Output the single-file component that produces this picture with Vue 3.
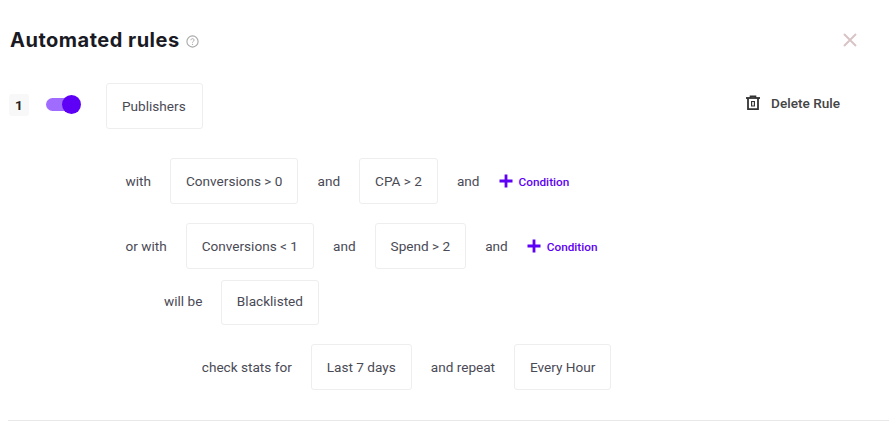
<script setup>
const rows = [
  { indent: 'r1', items: [['t','with'],['b','Conversions > 0'],['t','and'],['b','CPA > 2'],['t','and'],['c','Condition']] },
  { indent: 'r2', items: [['t','or with'],['b','Conversions < 1'],['t','and'],['b','Spend > 2'],['t','and'],['c','Condition']] },
  { indent: 'r3', items: [['t','will be'],['b','Blacklisted']] },
  { indent: 'r4', items: [['t','check stats for'],['b','Last 7 days'],['t','and repeat'],['b','Every Hour']] }
]
</script>

<template>
  <div class="page">
    <header class="head">
      <div class="title-wrap">
        <h1 class="title">Automated rules</h1>
        <svg class="help" width="13" height="13" viewBox="0 0 13 13" fill="none">
          <circle cx="6.5" cy="6.5" r="5.6" stroke="#a8a8a8" stroke-width="1.1" />
          <path d="M4.9 5.2c0-.9.7-1.5 1.6-1.5s1.6.6 1.6 1.4c0 1.2-1.6 1.2-1.6 2.5" stroke="#a8a8a8" stroke-width="1" />
          <circle cx="6.5" cy="9.3" r=".65" fill="#a8a8a8" />
        </svg>
      </div>
      <svg class="close" width="14" height="14" viewBox="0 0 14 14" fill="none">
        <path d="M1 1l12 12M13 1L1 13" stroke="#d8c4c6" stroke-width="2" />
      </svg>
    </header>

    <section class="rule-top">
      <span class="num">1</span>
      <span class="toggle"><span class="knob"></span></span>
      <span class="box">Publishers</span>
      <span class="delete">
        <svg width="16" height="16" viewBox="0 0 16 16" fill="none">
          <path d="M1 3h14" stroke="#333" stroke-width="1.8" />
          <path d="M5.5 3V1.2h5V3" stroke="#333" stroke-width="1.6" />
          <path d="M3 3v11.2h10V3" stroke="#333" stroke-width="1.8" />
          <path d="M6.6 6.5h2.8v4.5H6.6z" stroke="#333" stroke-width="1.2" />
        </svg>
        Delete Rule
      </span>
    </section>

    <section class="rows">
      <div v-for="(row, i) in rows" :key="i" class="row" :class="row.indent">
        <template v-for="(it, j) in row.items" :key="j">
          <span v-if="it[0] === 't'" class="txt">{{ it[1] }}</span>
          <span v-else-if="it[0] === 'b'" class="box">{{ it[1] }}</span>
          <span v-else class="cond">
            <svg width="14" height="14" viewBox="0 0 14 14"><path d="M7 0.5v13M0.5 7h13" stroke="#5e00f5" stroke-width="2.8" /></svg>
            <span class="cond-label">{{ it[1] }}</span>
          </span>
        </template>
      </div>
    </section>

    <hr class="rule-line" />
  </div>
</template>

<style>
html, body { margin: 0; background: #fff; }
</style>

<style scoped>
.page {
  width: 892px;
  height: 428px;
  box-sizing: border-box;
  overflow: hidden;
  padding: 0 3px 0 8px;
  font-family: Roboto, "Liberation Sans", sans-serif;
  font-size: 13.6px;
  color: #4a4a55;
}
.head {
  display: flex;
  justify-content: space-between;
  align-items: center;
  height: 33px;
  margin-top: 24px;
  padding: 0 32px 0 2px;
}
.title-wrap { display: flex; align-items: center; gap: 6px; }
.title {
  margin: 0;
  font-family: Inter, sans-serif;
  font-size: 20px;
  letter-spacing: 0.5px;
  font-weight: 700;
  color: #1a1a24;
  line-height: 33px;
}
.help { margin-top: 1px; }
.close { margin-top: -1px; }
.rule-top {
  display: flex;
  align-items: center;
  margin-top: 26px;
  height: 46px;
}
.num {
  width: 20px;
  height: 22px;
  margin-left: 1px;
  margin-top: -3px;
  background: #f8f8f8;
  border-radius: 3px;
  display: flex;
  align-items: center;
  justify-content: center;
  font-weight: 700;
  color: #222;
}
.toggle {
  position: relative;
  width: 34px;
  height: 13px;
  margin-left: 17px;
  margin-top: -3px;
  background: #a06cff;
  border-radius: 7px;
}
.knob {
  position: absolute;
  right: -1px;
  top: -3px;
  width: 19px;
  height: 19px;
  border-radius: 50%;
  background: #5e00f5;
}
.box {
  height: 46px;
  box-sizing: border-box;
  padding: 0 15px;
  display: inline-flex;
  align-items: center;
  border: 1px solid #eeeeee;
  border-radius: 3px;
  white-space: nowrap;
  background: #fff;
}
.rule-top .box { margin-left: 26px; width: 97px; padding-bottom: 1px; }
.delete {
  margin-left: auto;
  margin-right: 49px;
  margin-top: -6px;
  display: inline-flex;
  align-items: center;
  gap: 10px;
  font-weight: 500;
  color: #444;
}
.rows { display: flex; flex-direction: column; margin-top: 29px; }
.row { display: flex; align-items: center; gap: 19px; }
.row + .row { margin-top: 19px; }
.r1, .r2 { padding-left: 117.5px; }
.row.r3 { padding-left: 156px; margin-top: 11px; gap: 18.5px; }
.row.r3 .box { height: 45px; padding-bottom: 3px; }
.row.r3 .txt { margin-bottom: 3px; }
.row.r4 { padding-left: 193.8px; margin-top: 19px; }
.cond {
  display: inline-flex;
  align-items: center;
  gap: 6px;
  color: #5e00f5;
  font-size: 11.8px;
  font-weight: 500;
}
.cond-label { margin-top: 1px; }
.rule-line {
  margin: 30px 0 0;
  border: 0;
  border-top: 1px solid #e8e8e8;
}
</style>
